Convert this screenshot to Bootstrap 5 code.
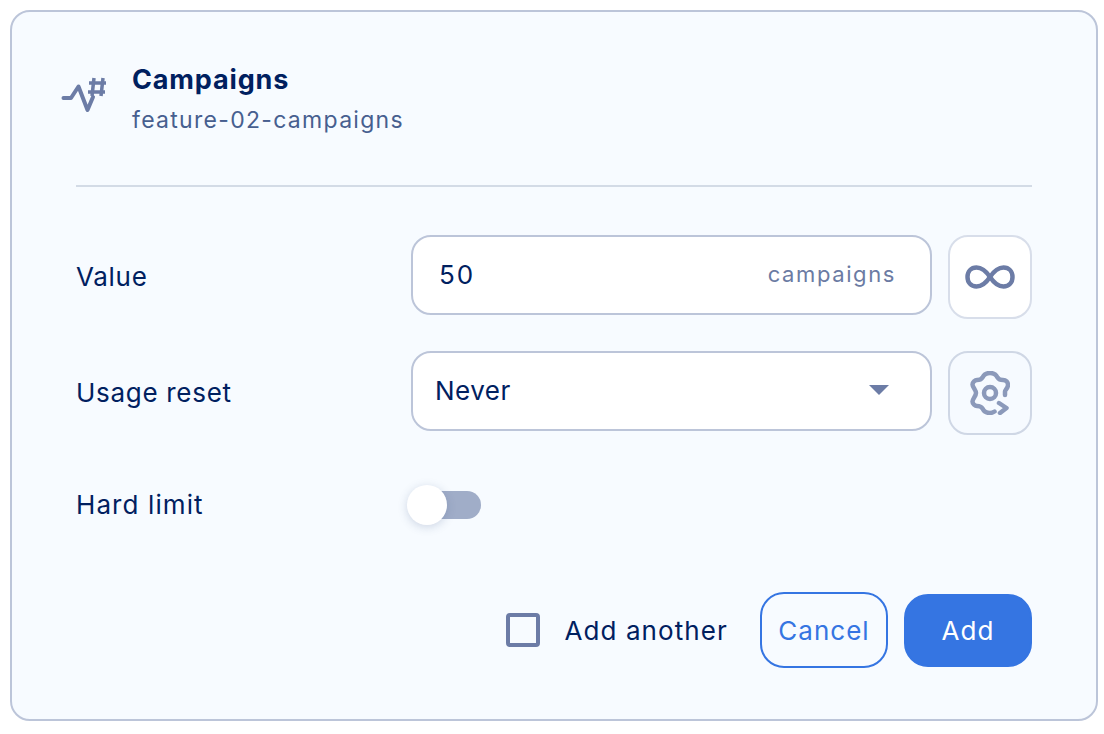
<!DOCTYPE html>
<html lang="en">
<head>
<meta charset="utf-8">
<title>Campaigns</title>
<link href="https://cdn.jsdelivr.net/npm/bootstrap@5.3.0/dist/css/bootstrap.min.css" rel="stylesheet">
<style>
html,body{height:100%;background:#fff;}
body{font-family:"Inter","Liberation Sans",sans-serif;color:#00205f;padding:10px 6px 13px 10px;overflow:hidden;}
.panel{background:#f7fbff;border:2px solid #bcc5d9;border-radius:20px;height:711px;padding:0 64px 0 64px;}
.head{height:175px;position:relative;border-bottom:2px solid #d3dbe6;padding-top:50px;padding-left:56px;}
.head-icon{position:absolute;left:-16px;top:60px;width:48px;height:46px;}
.title{font-size:27px;font-weight:700;line-height:36px;color:#00205f;letter-spacing:.85px;}
.sub{font-size:23px;line-height:30px;margin-top:7px;color:#475f8f;letter-spacing:1.3px;}
.form-line{margin-top:48px;}
.form-line+.form-line{margin-top:32px;}
.lbl{width:335px;font-size:26px;line-height:32px;height:80px;display:flex;align-items:center;color:#00205f;letter-spacing:.7px;padding-top:4px;}
.field{width:521px;height:80px;background:#fff;border:2px solid #bcc5d9;border-radius:20px;font-size:26px;color:#00205f;padding-bottom:2px;}
.num{padding-left:26px;letter-spacing:2px;}
.unit{font-size:22px;color:#6b7ba3;padding-right:34px;letter-spacing:1.6px;}
.opt{padding-left:22px;padding-right:41px;letter-spacing:.5px;}
.caret{width:0;height:0;border-left:10px solid transparent;border-right:10px solid transparent;border-top:10px solid #6c7ca6;}
.sq{width:84px;height:84px;margin-left:16px;border:2px solid #d8deea;border-radius:20px;background:#fff;}
.sq.off{background:#f6faff;border-color:#cfd7e5;}
.lbl-hard{margin-top:50px;height:40px;}
.lbl-hard .lbl{height:40px;padding-top:0;letter-spacing:1.1px;}
.sw{width:74px;height:40px;position:relative;margin-left:-4px;}
.sw-track{position:absolute;left:16px;top:6px;width:58px;height:28px;background:#a0adc8;border-radius:14px;}
.sw-knob{position:absolute;left:0;top:0;width:40px;height:40px;border-radius:50%;background:#fff;box-shadow:0 2px 10px rgba(60,80,130,.22);}
.foot{margin-top:67px;}
.tick{width:34px;height:34px;border:4px solid #6c7ca6;border-radius:4px;margin-right:24px;}
.another{font-size:26px;margin-right:32px;letter-spacing:1.1px;}
.act-cancel,.act-add{width:128px;font-size:26px;border-radius:24px;padding:0;display:flex;align-items:center;justify-content:center;letter-spacing:1px;}
.act-cancel{height:76px;background:transparent;border:2px solid #3575e2;color:#3575e2;}
.act-add{height:73px;margin-left:16px;background:#3575e2;border:2px solid #3575e2;color:#fff;}
</style>
</head>
<body>
<div class="panel">
  <div class="head">
    <svg class="head-icon" viewBox="0 0 48 46" fill="none" stroke="#6c7ca6" stroke-linecap="round" stroke-linejoin="round">
      <path d="M3.500 26H11L18.500 14.500L27.500 38L33 25" stroke-width="4"/>
      <path d="M29 11H46M28 20H45M34 6L32 24M43 6L41 24" stroke-width="3.500" stroke-linecap="butt"/>
    </svg>
    <div class="title">Campaigns</div>
    <div class="sub">feature-02-campaigns</div>
  </div>

  <div class="form-line d-flex align-items-start">
    <div class="lbl">Value</div>
    <div class="field num d-flex align-items-center justify-content-between">
      <span>50</span><span class="unit">campaigns</span>
    </div>
    <div class="sq d-flex align-items-center justify-content-center">
      <svg width="50" height="24" viewBox="0 0 50 24" fill="none" stroke="#6c7ca6" stroke-width="4.500"><path d="M25 12C21 6 17 2.500 11.500 2.500C6 2.500 2.500 6.500 2.500 12C2.500 17.500 6 21.500 11.500 21.500C17 21.500 21 18 25 12C29 6 33 2.500 38.500 2.500C44 2.500 47.500 6.500 47.500 12C47.500 17.500 44 21.500 38.500 21.500C33 21.500 29 18 25 12Z"/></svg>
    </div>
  </div>

  <div class="form-line d-flex align-items-start">
    <div class="lbl">Usage reset</div>
    <div class="field opt d-flex align-items-center justify-content-between">
      <span>Never</span><span class="caret"></span>
    </div>
    <div class="sq off d-flex align-items-center justify-content-center">
      <svg width="40" height="44" viewBox="0 0 40 44" fill="none" stroke="#8b99ba" stroke-width="4.500" stroke-linecap="round" stroke-linejoin="round"><circle cx="20" cy="22" r="6"/><path d="M35 24V20.500C35 19 38 17 38 14C38 11 36 9 33 9C30 9 28.500 8 27.500 6.500C26 3.500 23.500 2 20 2C16.500 2 14 3.500 12.500 6.500C11.500 8 10 9 7 9C5 9 2.500 11 2.500 13.500C2.500 16 6 19 6 22C6 25 2.500 28 2.500 30.500C2.500 33 5 35 7 35C10 35 11.500 36 12.500 37.500C14 40.500 16.500 42 20 42C21.500 42 23 41.500 24.500 40.500"/><path d="M29 32L36.500 37L30 42"/></svg>
    </div>
  </div>

  <div class="lbl-hard d-flex align-items-center">
    <div class="lbl">Hard limit</div>
    <div class="sw"><span class="sw-track"></span><span class="sw-knob"></span></div>
  </div>

  <div class="foot d-flex align-items-center justify-content-end">
    <span class="tick"></span>
    <span class="another">Add another</span>
    <button type="button" class="btn act-cancel">Cancel</button>
    <button type="button" class="btn act-add">Add</button>
  </div>
</div>
<script src="https://cdn.jsdelivr.net/npm/bootstrap@5.3.0/dist/js/bootstrap.bundle.min.js"></script>
</body>
</html>
